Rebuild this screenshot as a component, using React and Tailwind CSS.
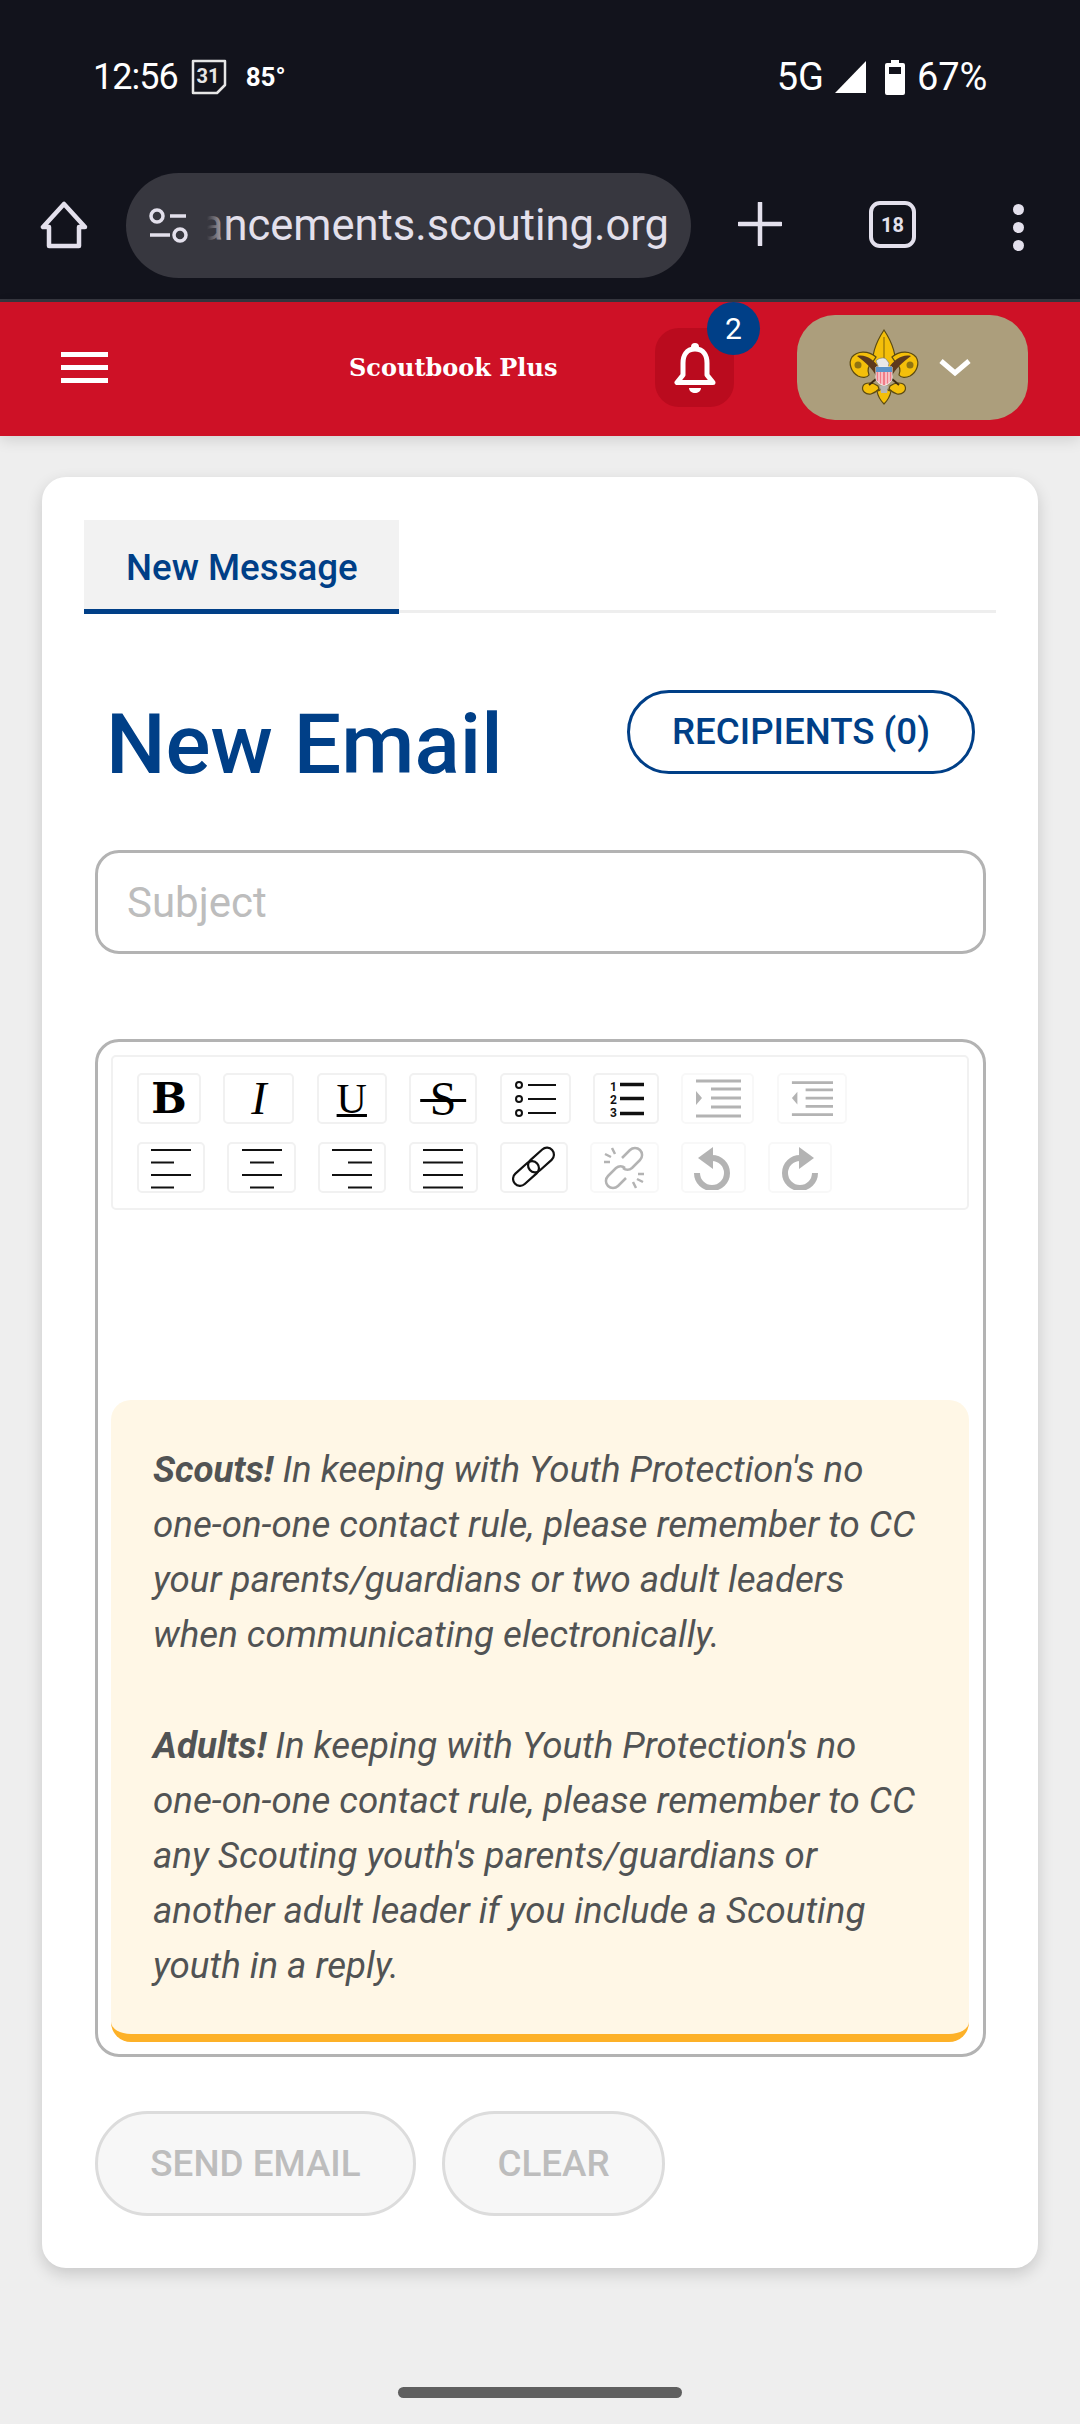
// ── Status bar ────────────────────────────────────────────────
function StatusBar() {
  return (
    <div className="flex h-[154px] items-center pl-[93px] text-white">
      <span className="text-[36px] leading-none tracking-[-1px]">12:56</span>
      <svg width="36" height="36" viewBox="0 0 36 36" className="ml-[13px]">
        <path d="M2 2h32v24l-8 8H2z" fill="none" stroke="#e6e6e6" strokeWidth="2.5" strokeLinejoin="round" />
        <text x="17" y="24" textAnchor="middle" fontSize="20" fontWeight="700" fill="#e6e6e6">31</text>
      </svg>
      <span className="ml-[19px] text-[26px] font-bold leading-none">85°</span>
      <span className="ml-[491px] text-[38px] leading-none">5G</span>
      <svg width="33" height="34" viewBox="0 0 33 34" className="ml-[10px]">
        <path d="M32 1v32H1z" fill="#fff" />
      </svg>
      <svg width="20" height="35" viewBox="0 0 20 35" className="ml-[18px]">
        <path d="M6 0h8v3h4a2 2 0 0 1 2 2v28a2 2 0 0 1-2 2H2a2 2 0 0 1-2-2V5a2 2 0 0 1 2-2h4z" fill="#fff" />
        <rect x="4" y="7" width="12" height="7" fill="#12131c" />
      </svg>
      <span className="ml-[12px] text-[38px] leading-none">67%</span>
    </div>
  )
}

// ── Browser toolbar ───────────────────────────────────────────
function BrowserBar() {
  return (
    <div className="flex h-[148px] items-start border-b-[3px] border-[#36373f] pl-[40px] text-[#e3e0ec]">
      <svg width="48" height="48" viewBox="0 0 48 48" className="mt-[47px]">
        <path d="M24 3 3 26h6v19h30V26h6z" fill="none" stroke="#e3e0ec" strokeWidth="4.5" strokeLinejoin="round" />
      </svg>
      <div className="ml-[38px] mt-[19px] flex h-[105px] w-[565px] items-center rounded-full bg-[#37373f] pl-[22px]">
        <svg width="40" height="36" viewBox="0 0 40 36">
          <circle cx="9" cy="8" r="6" fill="none" stroke="#e3e0ec" strokeWidth="3.5" />
          <path d="M22 8h16M2 27h20" stroke="#e3e0ec" strokeWidth="3.5" />
          <circle cx="32" cy="27" r="6" fill="none" stroke="#e3e0ec" strokeWidth="3.5" />
        </svg>
        <div className="relative ml-[19px] flex w-[462px] justify-end overflow-hidden whitespace-nowrap text-[43.5px] leading-[52px]">
          <span className="shrink-0">ancements.scouting.org</span>
          <div className="absolute inset-y-0 left-0 w-[24px] bg-gradient-to-r from-[#37373f] to-transparent" />
        </div>
      </div>
      <svg width="44" height="44" viewBox="0 0 44 44" className="ml-[47px] mt-[48px]">
        <path d="M22 1v42M1 22h42" stroke="#e3e0ec" strokeWidth="4.5" strokeLinecap="round" />
      </svg>
      <div className="ml-[87px] mt-[47px] flex h-[47px] w-[47px] items-center justify-center rounded-[11px] border-[4.5px] border-[#e3e0ec] text-[20px] font-bold">18</div>
      <div className="ml-[97px] mt-[50px] flex flex-col gap-[7px]">
        <span className="h-[11px] w-[11px] rounded-full bg-[#e3e0ec]" />
        <span className="h-[11px] w-[11px] rounded-full bg-[#e3e0ec]" />
        <span className="h-[11px] w-[11px] rounded-full bg-[#e3e0ec]" />
      </div>
    </div>
  )
}

// ── BSA emblem ────────────────────────────────────────────────
function Emblem() {
  const side = (
    <>
      <path d="M38 38C30 31 19 32 14 38c-4 6-1 15 6 19 4 2 9 2 11-1-2-5-1-9 3-12z" fill="#f4bf0a" stroke="#5b4a12" strokeWidth="1.2" />
      <circle cx="20" cy="46" r="3.5" fill="#8f7412" />
      <path d="M40 67c-5-4-13-4-15 0-2 5 3 9 8 8 3-1 6-3 8-5z" fill="#f4bf0a" stroke="#5b4a12" strokeWidth="1.2" />
      <path d="M19 37c8-2 17 3 23 13l-4 7c-3-7-10-13-19-20z" fill="#5e3a1d" />
      <path d="M38 60 31 66" stroke="#3d2a14" strokeWidth="2" />
    </>
  )
  return (
    <svg width="92" height="80" viewBox="0 0 92 80" className="ml-[41px]">
      <g transform="translate(0,-9)">
        <path d="M46 11c-8 12-13 26-11 39h22c2-13-3-27-11-39z" fill="#f4bf0a" stroke="#5b4a12" strokeWidth="1.2" />
        <path d="M46 18v30" stroke="#a6800a" strokeWidth="1.5" />
        {side}
        <g transform="matrix(-1 0 0 1 92 0)">{side}</g>
        <path d="M39 72c2 0 5-2 7-6 2 4 5 6 7 6-1 6-4 10-7 13-3-3-6-7-7-13z" fill="#f4bf0a" stroke="#5b4a12" strokeWidth="1.2" />
        <path d="M38 42c2-3 8-4 10-2l3 4-1 5H41z" fill="#e8e8e8" stroke="#777" strokeWidth="0.6" />
        <path d="M38 48h16v11c0 4-4 6-8 8-4-2-8-4-8-8z" fill="#f07c88" stroke="#eee" strokeWidth="1" />
        <path d="M38 48h16v5H38z" fill="#5b93c9" />
        <path d="M41 53v11M44 53v13M48 53v13M51 53v11" stroke="#fff" strokeWidth="1" />
        <path d="M42 67h8l-1 7h-6z" fill="#b5b5b5" />
      </g>
    </svg>
  )
}

// ── App header ────────────────────────────────────────────────
function AppHeader() {
  return (
    <div className="relative flex h-[134px] items-center bg-[#ce1126] pb-[3px] shadow-[0_4px_14px_rgba(0,0,0,0.12)]">
      <div className="ml-[61px] flex w-[47px] flex-col gap-[8px]">
        <span className="h-[5px] bg-white" />
        <span className="h-[5px] bg-white" />
        <span className="h-[5px] bg-white" />
      </div>
      <span className="ml-[241px] w-[306px] whitespace-nowrap text-[24px] font-bold text-white [font-family:'DejaVu_Serif',serif]">Scoutbook Plus</span>
      <div className="relative flex h-[79px] w-[79px] items-center justify-center rounded-[24px] bg-[#ba0b1e]">
        <svg width="42" height="50" viewBox="0 0 42 50">
          <circle cx="21" cy="4" r="4" fill="#fff" />
          <path d="M21 6C12 6 9 13 9 20v12l-6 7.500h36L33 32V20c0-7-3-14-12-14z" fill="none" stroke="#fff" strokeWidth="5" strokeLinejoin="round" />
          <path d="M15 45h12c0 3-3 5-6 5s-6-2-6-5z" fill="#fff" />
        </svg>
        <span className="absolute right-[-26px] top-[-26px] flex h-[53px] w-[53px] items-center justify-center rounded-full bg-[#003f87] text-[30px] text-white">2</span>
      </div>
      <div className="ml-[63px] flex h-[105px] w-[231px] items-center rounded-[38px] bg-[#ac9e7c]">
        <Emblem />
        <svg width="32" height="18" viewBox="0 0 32 18" className="ml-[9px]" fill="none" stroke="#fff" strokeWidth="5">
          <path d="M2 2l14 12L30 2" />
        </svg>
      </div>
    </div>
  )
}

// ── Editor toolbar ────────────────────────────────────────────
function Opt({ className = '', off, children }) {
  return (
    <div className={`flex h-[51px] items-center justify-center rounded-[5px] border-2 ${off ? 'border-[#f8f8f8]' : 'border-[#f1f1f1]'} ${className}`}>
      {children}
    </div>
  )
}

function Align({ lines }) {
  return (
    <svg width="44" height="44" viewBox="0 0 44 44" stroke="#111" strokeWidth="2">
      {lines.map((l, i) => <path key={i} d={`M${l[0]} ${4 + i * 12.5}H${l[1]}`} />)}
    </svg>
  )
}

function Indent({ flip }) {
  return (
    <svg width="46" height="40" viewBox="0 0 46 40" stroke="#b3b3b3" strokeWidth="3" className={flip ? 'w-[42px]' : ''}>
      <path d="M1 2h45M16 10h30M16 19h30M16 28h30M1 37h45" />
      {flip
        ? <path d="M1 19 7 12v14z" fill="#b3b3b3" stroke="none" />
        : <path d="M7 19 1 12v14z" fill="#b3b3b3" stroke="none" />}
    </svg>
  )
}

function Toolbar() {
  return (
    <div className="flex h-[155px] flex-col gap-[18px] rounded-[5px] border-2 border-[#f1f1f1] pl-[24px] pt-[16px]">
      <div className="flex gap-[22.4px]">
        <Opt className="w-[64px]"><span className="text-[42px] font-bold leading-none text-black [font-family:'DejaVu_Serif',serif]">B</span></Opt>
        <Opt className="w-[71px]"><span className="text-[46px] italic leading-none text-black [font-family:'Liberation_Serif',serif]">I</span></Opt>
        <Opt className="w-[70px]"><span className="text-[42px] leading-none text-black underline decoration-[3px] underline-offset-[1px] [font-family:'Liberation_Serif',serif]">U</span></Opt>
        <Opt className="w-[68px]"><span className="text-[48px] leading-none text-black line-through decoration-[3px] [font-family:'Liberation_Serif',serif]">&thinsp;S&thinsp;</span></Opt>
        <Opt className="w-[71px]">
          <svg width="42" height="36" viewBox="0 0 42 36" stroke="#111" fill="none">
            <circle cx="5" cy="4" r="3" strokeWidth="2" />
            <circle cx="5" cy="18" r="3" strokeWidth="2" />
            <circle cx="5" cy="32" r="3" strokeWidth="2" />
            <path d="M14 4h28M14 18h28M14 32h28" strokeWidth="2" />
          </svg>
        </Opt>
        <Opt className="w-[66px]">
          <svg width="36" height="44" viewBox="0 0 36 44" fill="#111">
            <text x="2" y="13.5" fontSize="12" fontWeight="700">1</text>
            <text x="2" y="27" fontSize="12" fontWeight="700">2</text>
            <text x="2" y="39.5" fontSize="12" fontWeight="700">3</text>
            <path d="M12 7.500h24M12 21.500h24M12 36.500h24" stroke="#111" strokeWidth="3.5" />
          </svg>
        </Opt>
        <Opt className="w-[73px]" off><Indent /></Opt>
        <Opt className="w-[70px]" off><Indent flip /></Opt>
      </div>
      <div className="flex gap-[22.2px]">
        <Opt className="w-[68px]"><Align lines={[[2, 42], [2, 25], [2, 42], [2, 25]]} /></Opt>
        <Opt className="w-[69px]"><Align lines={[[2, 42], [10, 34], [2, 42], [10, 34]]} /></Opt>
        <Opt className="w-[68px]"><Align lines={[[2, 42], [18, 42], [2, 42], [18, 42]]} /></Opt>
        <Opt className="w-[69px]"><Align lines={[[2, 42], [2, 42], [2, 42], [2, 42]]} /></Opt>
        <Opt className="w-[68px]">
          <svg width="44" height="44" viewBox="0 0 44 44" fill="none" stroke="#111" strokeWidth="2.2">
            <rect x="-1" y="20.5" width="30" height="14" rx="7" transform="rotate(-42 14 27.500)" />
            <rect x="14" y="7" width="30" height="14" rx="7" transform="rotate(-42 29 14)" />
          </svg>
        </Opt>
        <Opt className="w-[69px]" off>
          <svg width="44" height="44" viewBox="0 0 44 44" fill="none" stroke="#b3b3b3" strokeWidth="2.5">
            <path d="M20 12l8-8a7 7 0 0 1 10 10l-8 8a7 7 0 0 1-9 0" />
            <path d="M24 32l-8 8a7 7 0 0 1-10-10l8-8a7 7 0 0 1 9 0" />
            <path d="M10 2l3 6M3 8l6 3M2 16h6M34 42l-3-6M41 36l-6-3M42 28h-6" />
          </svg>
        </Opt>
        <Opt className="w-[65px]" off>
          <svg width="40" height="44" viewBox="0 0 40 44" fill="none">
            <path d="M18 12a15 15 0 1 1-15 15" stroke="#b3b3b3" strokeWidth="6" />
            <path d="M19 1v22L4 12z" fill="#b3b3b3" />
          </svg>
        </Opt>
        <Opt className="w-[64px]" off>
          <svg width="36" height="44" viewBox="0 0 36 44" fill="none">
            <path d="M18 12a15 15 0 1 0 15 15" stroke="#b3b3b3" strokeWidth="6" />
            <path d="M17 1v22l15-11z" fill="#b3b3b3" />
          </svg>
        </Opt>
      </div>
    </div>
  )
}

// ── Notice ────────────────────────────────────────────────────
function Notice() {
  return (
    <div className="mt-[190px] h-[642px] rounded-[20px] border-b-[8px] border-[#fdb128] bg-[#fff7e6] pl-[42px] pt-[42px] text-[36.7px] italic leading-[55.1px] text-[#515354]">
      <p><b>Scouts!</b> In keeping with Youth Protection's no</p>
      <p>one-on-one contact rule, please remember to CC</p>
      <p>your parents/guardians or two adult leaders</p>
      <p>when communicating electronically.</p>
      <p className="mt-[55.5px]"><b>Adults!</b> In keeping with Youth Protection's no</p>
      <p>one-on-one contact rule, please remember to CC</p>
      <p>any Scouting youth's parents/guardians or</p>
      <p>another adult leader if you include a Scouting</p>
      <p>youth in a reply.</p>
    </div>
  )
}

// ── App ───────────────────────────────────────────────────────
export default function App() {
  return (
    <div className="relative h-[2424px] w-[1080px] overflow-hidden bg-[#eeeeee] [font-family:Roboto,sans-serif]">
      <div className="bg-[#12131c]">
        <StatusBar />
        <BrowserBar />
      </div>
      <AppHeader />

      <div className="mx-[42px] mt-[41px] h-[1791px] rounded-[24px] bg-white px-[42px] pt-[43px] shadow-[0_6px_16px_rgba(0,0,0,0.16)]">
        <div className="flex h-[93px] border-b-[3px] border-[#eeeeee]">
          <div className="flex h-[94px] w-[315px] items-center border-b-[5px] border-[#003f87] bg-[#f2f2f2] pl-[42px] pt-[7px] text-[36.7px] font-medium text-[#003f87]">New Message</div>
        </div>

        <div className="mt-[77px] flex items-start justify-between pl-[22px] pr-[21px]">
          <h1 className="mt-[8px] text-[84px] font-medium leading-[94px] text-[#003f87]">New Email</h1>
          <div className="flex h-[84px] w-[348px] items-center justify-center rounded-full border-[3px] border-[#003f87] text-[36.7px] font-medium text-[#003f87]">RECIPIENTS (0)</div>
        </div>

        <div className="ml-[11px] mr-[10px] mt-[58px] flex h-[104px] items-center rounded-[24px] border-[3px] border-[#b3b3b3] pl-[29px] text-[42px] text-[#bdbdbd]">Subject</div>

        <div className="ml-[11px] mr-[10px] mt-[85px] h-[1018px] rounded-[24px] border-[3px] border-[#b3b3b3] pl-[13px] pr-[14px] pt-[13px]">
          <Toolbar />
          <Notice />
        </div>

        <div className="ml-[11px] mt-[54px] flex gap-[26px] text-[36.8px] font-medium text-[#bdbdbd]">
          <div className="flex h-[105px] w-[321px] items-center justify-center rounded-full border-[3px] border-[#dcdcdc] bg-[#f7f7f7]">SEND EMAIL</div>
          <div className="flex h-[105px] w-[223px] items-center justify-center rounded-full border-[3px] border-[#dcdcdc] bg-[#f7f7f7]">CLEAR</div>
        </div>
      </div>

      <div className="absolute bottom-[26px] left-[398px] h-[11px] w-[284px] rounded-full bg-[#5f5f5f]" />
    </div>
  )
}
